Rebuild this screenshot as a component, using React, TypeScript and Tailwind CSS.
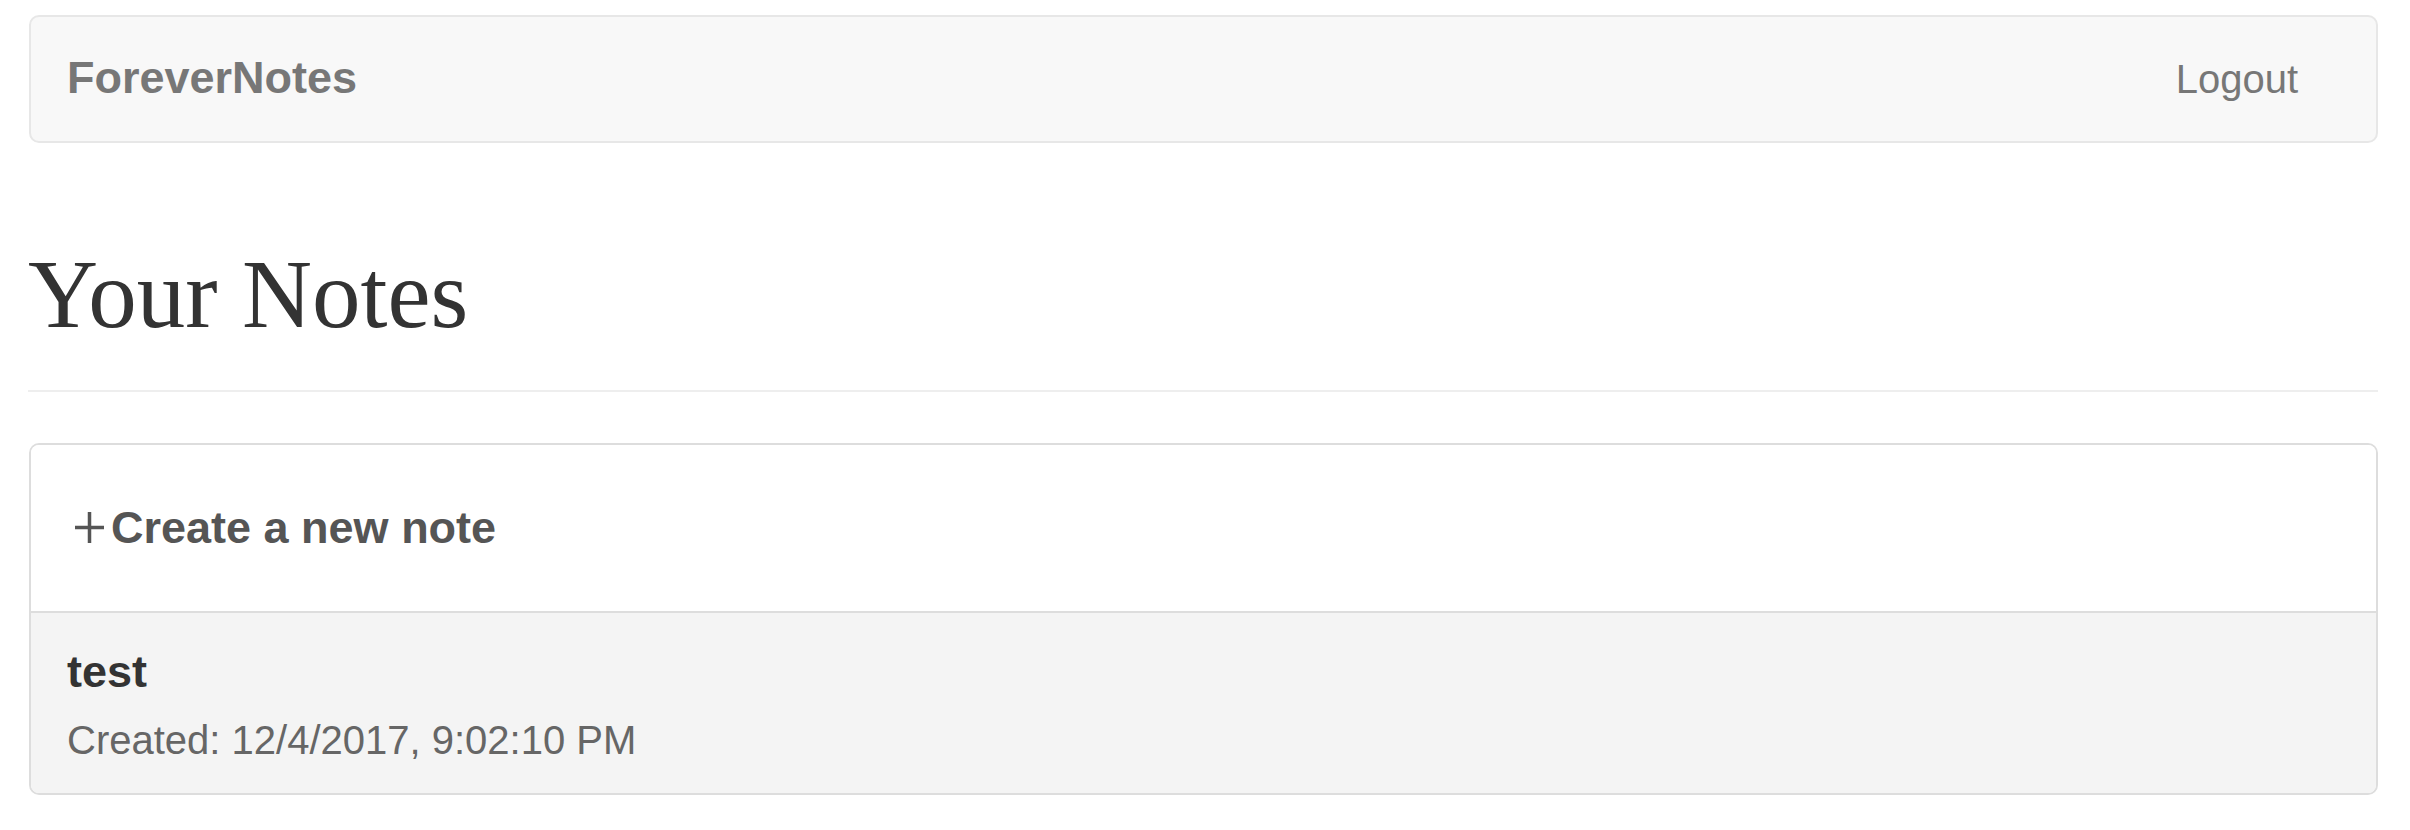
const sans = "font-['Liberation_Sans',Arial,sans-serif]";

const PlusIcon = () => (
  <svg width="29" height="31" viewBox="0 0 29 31" className="shrink-0">
    <path d="M14.5 0v31M0 15.5h29" stroke="#555" strokeWidth="3.5" fill="none" />
  </svg>
);

const Navbar = () => (
  <nav className="h-[128px] border-2 border-[#e7e7e7] bg-[#f8f8f8] rounded-[10px] flex items-center justify-between">
    <a className="pl-[36px] mb-[3px] text-[45px] leading-none font-bold text-[#777]">
      ForeverNotes
    </a>
    <a className="pr-[78px] mb-[1px] text-[40px] leading-none text-[#777]">Logout</a>
  </nav>
);

const NoteItem = ({ title, created }: { title: string; created: string }) => (
  <div className="bg-[#f4f4f4] pl-[36px] pt-[36px] pb-[33px]">
    <h4 className="text-[45px] leading-none font-bold text-[#333]">{title}</h4>
    <p className="mt-[26px] text-[40px] leading-none text-[#666]">Created: {created}</p>
  </div>
);

export default function App() {
  return (
    <div className={`${sans} bg-white min-h-screen pl-[29px] pr-[32px] pt-[15px]`}>
      <Navbar />
      <div className="mt-[103px]">
        <h1 className="font-['Liberation_Serif','Times_New_Roman',serif] text-[97px] leading-none text-[#333] -ml-[1px]">
          Your Notes
        </h1>
      </div>
      <hr className="mt-[47px] border-0 border-t-2 border-[#eee] -ml-[1px]" />
      <div className="mt-[51px] border-2 border-[#ddd] rounded-[10px] overflow-hidden">
        <a className="h-[166px] flex items-center pl-[44px] pb-[2px] bg-white">
          <PlusIcon />
          <span className="ml-[7px] text-[45px] leading-none font-bold text-[#555]">
            Create a new note
          </span>
        </a>
        <div className="border-t-2 border-[#ddd]">
          <NoteItem title="test" created="12/4/2017, 9:02:10 PM" />
        </div>
      </div>
    </div>
  );
}
